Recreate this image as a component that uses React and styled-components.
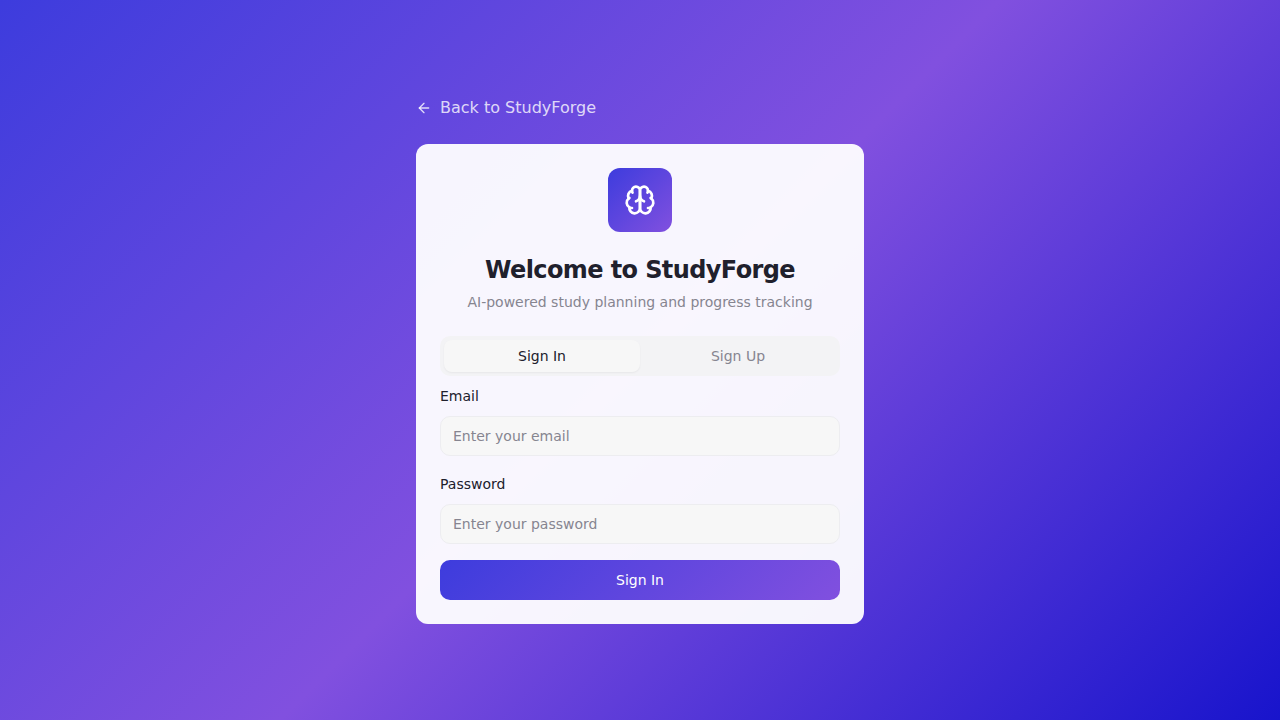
import React, { useState } from "react";
import styled, { createGlobalStyle } from "styled-components";
import { ArrowLeft } from "lucide-react";

const GlobalStyle = createGlobalStyle`
  *, *::before, *::after { box-sizing: border-box; }
  body {
    margin: 0;
    font-family: "DejaVu Sans", sans-serif;
    color: #20202c;
  }
`;

const Page = styled.main`
  min-height: 100vh;
  display: flex;
  align-items: center;
  justify-content: center;
  padding: 16px;
  background: linear-gradient(135deg, #3d3cdd 0%, #8150df 50%, #1814cc 100%);
`;

const Column = styled.div`
  width: 100%;
  max-width: 448px;
`;

const BackLink = styled.a`
  display: inline-flex;
  align-items: center;
  gap: 8px;
  margin-bottom: 24px;
  font-size: 16px;
  line-height: 24px;
  color: rgba(255, 255, 255, 0.8);
  text-decoration: none;
`;

const Card = styled.section`
  padding: 24px;
  border-radius: 12px;
  background: rgba(255, 255, 255, 0.95);
`;

const Header = styled.header`
  display: flex;
  flex-direction: column;
  align-items: center;
  margin-bottom: 24px;
  text-align: center;
`;

const Logo = styled.div`
  display: flex;
  align-items: center;
  justify-content: center;
  width: 64px;
  height: 64px;
  margin-bottom: 22px;
  border-radius: 12px;
  color: #fff;
  background: linear-gradient(135deg, #3d3cdd, #8150df);
`;

const Title = styled.h1`
  margin: 0 0 6px;
  font-size: 24px;
  line-height: 32px;
  font-weight: 700;
  letter-spacing: -0.025em;
`;

const Subtitle = styled.p`
  margin: 0;
  font-size: 14px;
  line-height: 20px;
  color: #868590;
`;

const TabList = styled.div`
  display: grid;
  grid-template-columns: 1fr 1fr;
  height: 40px;
  padding: 4px;
  border-radius: 10px;
  background: #f3f3f5;
`;

const Tab = styled.button`
  border: 0;
  border-radius: 8px;
  font: 500 14px/20px "DejaVu Sans", sans-serif;
  cursor: pointer;
  color: ${(p) => (p.$active ? "#20202c" : "#868590")};
  background: ${(p) => (p.$active ? "#f7f7f7" : "transparent")};
  box-shadow: ${(p) => (p.$active ? "0 1px 2px rgba(0, 0, 0, 0.05)" : "none")};
`;

const Form = styled.form`
  display: flex;
  flex-direction: column;
  gap: 16px;
  margin-top: 8px;
`;

const Field = styled.div`
  display: flex;
  flex-direction: column;
  gap: 8px;
`;

const Label = styled.label`
  font-size: 14px;
  line-height: 24px;
  font-weight: 500;
`;

const Input = styled.input`
  width: 100%;
  height: 40px;
  padding: 8px 12px;
  border: 1px solid #ededf0;
  border-radius: 10px;
  font: 400 14px/20px "DejaVu Sans", sans-serif;
  color: #20202c;
  background: #f7f7f7;
  &::placeholder { color: #868590; opacity: 1; }
`;

const SubmitButton = styled.button`
  height: 40px;
  border: 0;
  border-radius: 10px;
  font: 500 14px/20px "DejaVu Sans", sans-serif;
  color: #fff;
  cursor: pointer;
  background: linear-gradient(135deg, #3d3cdd, #8150df);
`;

function BrainIcon() {
  return (
    <svg
      width="32"
      height="32"
      viewBox="0 0 24 24"
      fill="none"
      stroke="currentColor"
      strokeWidth="2"
      strokeLinecap="round"
      strokeLinejoin="round"
      aria-hidden="true"
    >
      <path d="M12 5a3 3 0 1 0-5.997.125 4 4 0 0 0-2.526 5.77 4 4 0 0 0 .556 6.588A4 4 0 1 0 12 18Z" />
      <path d="M12 5a3 3 0 1 1 5.997.125 4 4 0 0 1 2.526 5.77 4 4 0 0 1-.556 6.588A4 4 0 1 1 12 18Z" />
      <path d="M15 13a4.5 4.5 0 0 1-3-4 4.5 4.5 0 0 1-3 4" />
      <path d="M17.599 6.5a3 3 0 0 0 .399-1.375" />
      <path d="M6.003 5.125A3 3 0 0 0 6.401 6.5" />
      <path d="M3.477 10.896a4 4 0 0 1 .585-.396" />
      <path d="M19.938 10.5a4 4 0 0 1 .585.396" />
      <path d="M6 18a4 4 0 0 1-1.967-.516" />
      <path d="M19.967 17.484A4 4 0 0 1 18 18" />
    </svg>
  );
}

export default function App() {
  const [mode, setMode] = useState("Sign In");
  return (
    <>
      <GlobalStyle />
      <Page>
        <Column>
          <BackLink href="#">
            <ArrowLeft size={16} />
            Back to StudyForge
          </BackLink>
          <Card>
            <Header>
              <Logo>
                <BrainIcon />
              </Logo>
              <Title>Welcome to StudyForge</Title>
              <Subtitle>AI-powered study planning and progress tracking</Subtitle>
            </Header>
            <TabList role="tablist">
              {["Sign In", "Sign Up"].map((name) => (
                <Tab
                  key={name}
                  type="button"
                  role="tab"
                  aria-selected={mode === name}
                  $active={mode === name}
                  onClick={() => setMode(name)}
                >
                  {name}
                </Tab>
              ))}
            </TabList>
            <Form onSubmit={(e) => e.preventDefault()}>
              <Field>
                <Label htmlFor="email">Email</Label>
                <Input id="email" type="email" placeholder="Enter your email" />
              </Field>
              <Field>
                <Label htmlFor="password">Password</Label>
                <Input id="password" type="password" placeholder="Enter your password" />
              </Field>
              <SubmitButton type="submit">{mode}</SubmitButton>
            </Form>
          </Card>
        </Column>
      </Page>
    </>
  );
}
